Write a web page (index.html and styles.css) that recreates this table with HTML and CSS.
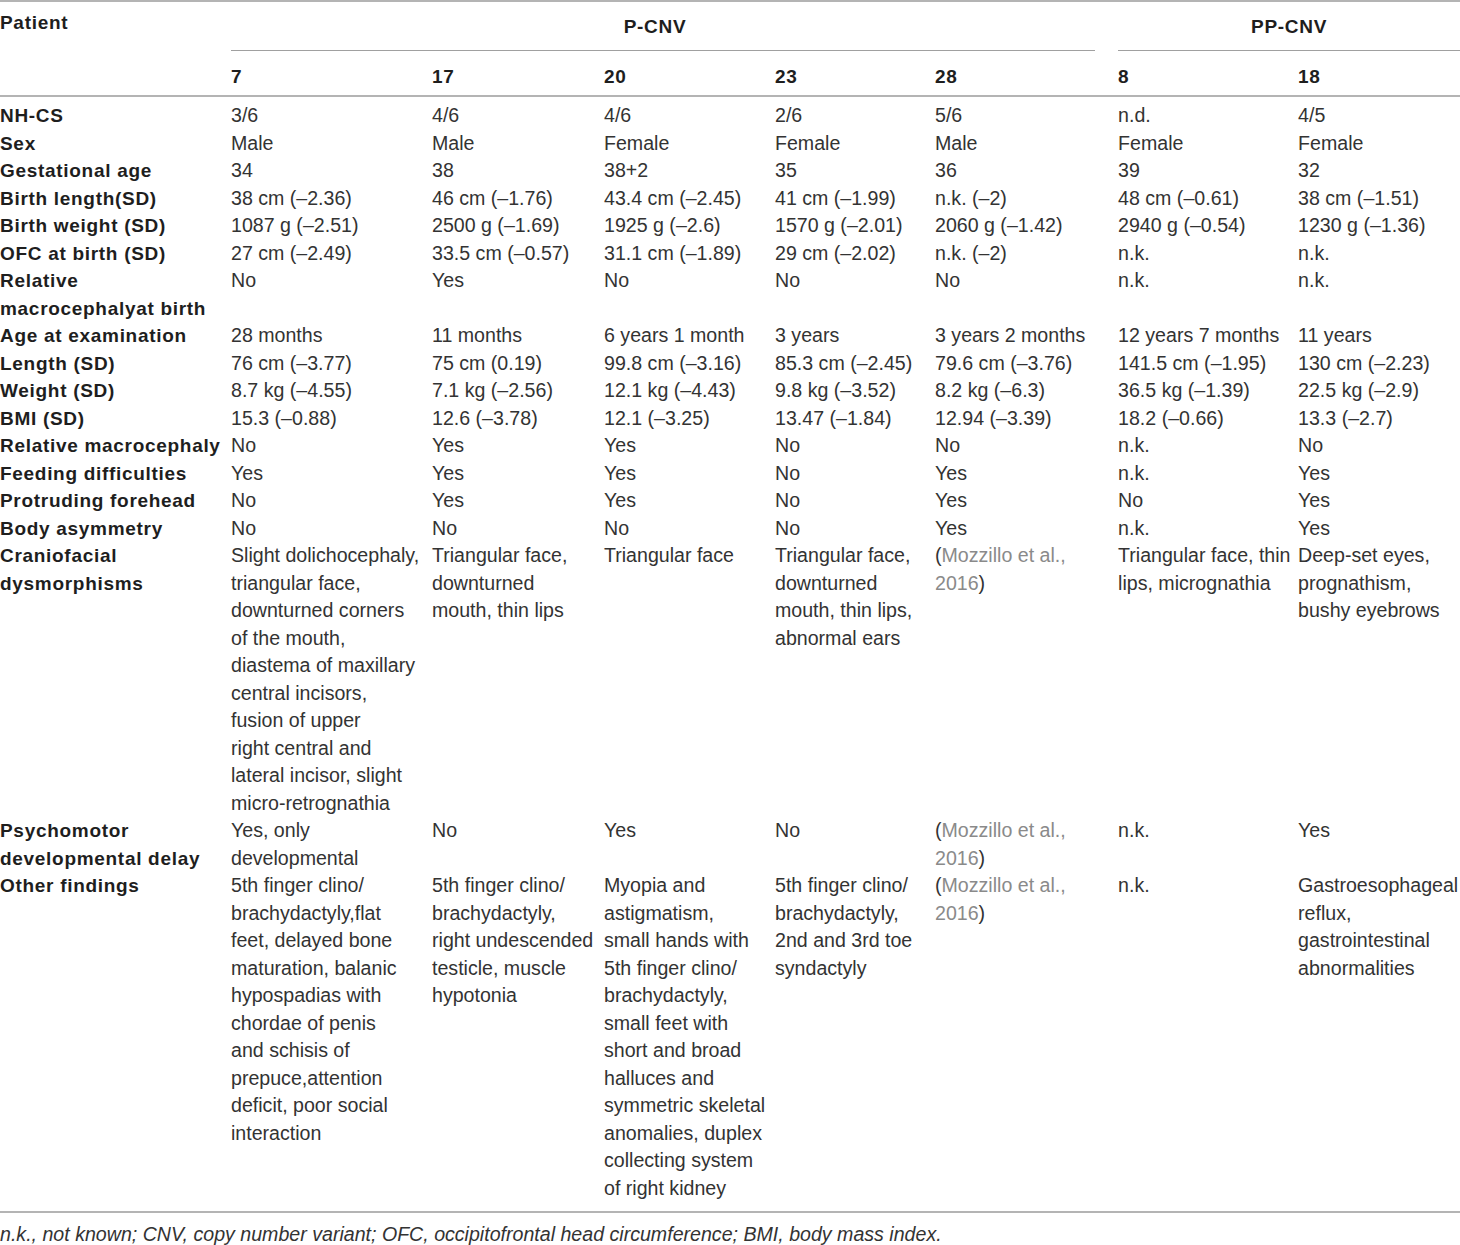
FILE: index.html
```html
<!DOCTYPE html>
<html lang="en">
<head>
<meta charset="UTF-8">
<meta name="viewport" content="width=device-width, initial-scale=1.0">
<title>Patient clinical features</title>
<link rel="stylesheet" href="styles.css">
</head>
<body>
<table class="data-table">
  <colgroup>
    <col class="col-label">
    <col class="col-7">
    <col class="col-17">
    <col class="col-20">
    <col class="col-23">
    <col class="col-28">
    <col class="col-8">
    <col class="col-18">
  </colgroup>
  <thead>
    <tr class="group-row">
      <th class="label">Patient</th>
      <th colspan="5" class="group"><div class="group-title group-p">P-CNV</div></th>
      <th colspan="2" class="group"><div class="group-title">PP-CNV</div></th>
    </tr>
    <tr class="id-row">
      <th></th>
      <th>7</th>
      <th>17</th>
      <th>20</th>
      <th>23</th>
      <th>28</th>
      <th>8</th>
      <th>18</th>
    </tr>
  </thead>
  <tbody>
    <tr class="first-row">
      <th class="label">NH-CS</th>
      <td>3/6</td><td>4/6</td><td>4/6</td><td>2/6</td><td>5/6</td><td>n.d.</td><td>4/5</td>
    </tr>
    <tr>
      <th class="label">Sex</th>
      <td>Male</td><td>Male</td><td>Female</td><td>Female</td><td>Male</td><td>Female</td><td>Female</td>
    </tr>
    <tr>
      <th class="label">Gestational age</th>
      <td>34</td><td>38</td><td>38+2</td><td>35</td><td>36</td><td>39</td><td>32</td>
    </tr>
    <tr>
      <th class="label">Birth length(SD)</th>
      <td>38 cm (–2.36)</td><td>46 cm (–1.76)</td><td>43.4 cm (–2.45)</td><td>41 cm (–1.99)</td><td>n.k. (–2)</td><td>48 cm (–0.61)</td><td>38 cm (–1.51)</td>
    </tr>
    <tr>
      <th class="label">Birth weight (SD)</th>
      <td>1087 g (–2.51)</td><td>2500 g (–1.69)</td><td>1925 g (–2.6)</td><td>1570 g (–2.01)</td><td>2060 g (–1.42)</td><td>2940 g (–0.54)</td><td>1230 g (–1.36)</td>
    </tr>
    <tr>
      <th class="label">OFC at birth (SD)</th>
      <td>27 cm (–2.49)</td><td>33.5 cm (–0.57)</td><td>31.1 cm (–1.89)</td><td>29 cm (–2.02)</td><td>n.k. (–2)</td><td>n.k.</td><td>n.k.</td>
    </tr>
    <tr>
      <th class="label">Relative<br>macrocephalyat birth</th>
      <td>No</td><td>Yes</td><td>No</td><td>No</td><td>No</td><td>n.k.</td><td>n.k.</td>
    </tr>
    <tr>
      <th class="label">Age at examination</th>
      <td>28 months</td><td>11 months</td><td>6 years 1 month</td><td>3 years</td><td>3 years 2 months</td><td>12 years 7 months</td><td>11 years</td>
    </tr>
    <tr>
      <th class="label">Length (SD)</th>
      <td>76 cm (–3.77)</td><td>75 cm (0.19)</td><td>99.8 cm (–3.16)</td><td>85.3 cm (–2.45)</td><td>79.6 cm (–3.76)</td><td>141.5 cm (–1.95)</td><td>130 cm (–2.23)</td>
    </tr>
    <tr>
      <th class="label">Weight (SD)</th>
      <td>8.7 kg (–4.55)</td><td>7.1 kg (–2.56)</td><td>12.1 kg (–4.43)</td><td>9.8 kg (–3.52)</td><td>8.2 kg (–6.3)</td><td>36.5 kg (–1.39)</td><td>22.5 kg (–2.9)</td>
    </tr>
    <tr>
      <th class="label">BMI (SD)</th>
      <td>15.3 (–0.88)</td><td>12.6 (–3.78)</td><td>12.1 (–3.25)</td><td>13.47 (–1.84)</td><td>12.94 (–3.39)</td><td>18.2 (–0.66)</td><td>13.3 (–2.7)</td>
    </tr>
    <tr>
      <th class="label">Relative macrocephaly</th>
      <td>No</td><td>Yes</td><td>Yes</td><td>No</td><td>No</td><td>n.k.</td><td>No</td>
    </tr>
    <tr>
      <th class="label">Feeding difficulties</th>
      <td>Yes</td><td>Yes</td><td>Yes</td><td>No</td><td>Yes</td><td>n.k.</td><td>Yes</td>
    </tr>
    <tr>
      <th class="label">Protruding forehead</th>
      <td>No</td><td>Yes</td><td>Yes</td><td>No</td><td>Yes</td><td>No</td><td>Yes</td>
    </tr>
    <tr>
      <th class="label">Body asymmetry</th>
      <td>No</td><td>No</td><td>No</td><td>No</td><td>Yes</td><td>n.k.</td><td>Yes</td>
    </tr>
    <tr>
      <th class="label">Craniofacial<br>dysmorphisms</th>
      <td>Slight dolichocephaly,<br>triangular face,<br>downturned corners<br>of the mouth,<br>diastema of maxillary<br>central incisors,<br>fusion of upper<br>right central and<br>lateral incisor, slight<br>micro-retrognathia</td>
      <td>Triangular face,<br>downturned<br>mouth, thin lips</td>
      <td>Triangular face</td>
      <td>Triangular face,<br>downturned<br>mouth, thin lips,<br>abnormal ears</td>
      <td>(<a class="cite">Mozzillo et al.,<br>2016</a>)</td>
      <td>Triangular face, thin<br>lips, micrognathia</td>
      <td>Deep-set eyes,<br>prognathism,<br>bushy eyebrows</td>
    </tr>
    <tr>
      <th class="label">Psychomotor<br>developmental delay</th>
      <td>Yes, only<br>developmental</td>
      <td>No</td>
      <td>Yes</td>
      <td>No</td>
      <td>(<a class="cite">Mozzillo et al.,<br>2016</a>)</td>
      <td>n.k.</td>
      <td>Yes</td>
    </tr>
    <tr class="last-row">
      <th class="label">Other findings</th>
      <td>5th finger clino/<br>brachydactyly,flat<br>feet, delayed bone<br>maturation, balanic<br>hypospadias with<br>chordae of penis<br>and schisis of<br>prepuce,attention<br>deficit, poor social<br>interaction</td>
      <td>5th finger clino/<br>brachydactyly,<br>right undescended<br>testicle, muscle<br>hypotonia</td>
      <td>Myopia and<br>astigmatism,<br>small hands with<br>5th finger clino/<br>brachydactyly,<br>small feet with<br>short and broad<br>halluces and<br>symmetric skeletal<br>anomalies, duplex<br>collecting system<br>of right kidney</td>
      <td>5th finger clino/<br>brachydactyly,<br>2nd and 3rd toe<br>syndactyly</td>
      <td>(<a class="cite">Mozzillo et al.,<br>2016</a>)</td>
      <td>n.k.</td>
      <td>Gastroesophageal<br>reflux,<br>gastrointestinal<br>abnormalities</td>
    </tr>
  </tbody>
</table>
<p class="footnote">n.k., not known; CNV, copy number variant; OFC, occipitofrontal head circumference; BMI, body mass index.</p>
</body>
</html>
```

FILE: styles.css
```css
body {
  margin: 0;
  background: #fff;
  color: #333;
  font-family: "Liberation Sans", Arial, sans-serif;
  font-size: 19.6px;
}

.data-table {
  width: 1460px;
  table-layout: fixed;
  border-collapse: collapse;
  border-top: 2px solid #b4b4b4;
  border-bottom: 2px solid #b4b4b4;
}

.col-label { width: 231px; }
.col-7 { width: 201px; }
.col-17 { width: 172px; }
.col-20 { width: 171px; }
.col-23 { width: 160px; }
.col-28 { width: 183px; }
.col-8 { width: 180px; }
.col-18 { width: 162px; }

.data-table th,
.data-table td {
  padding: 0;
  line-height: 27.5px;
  text-align: left;
  vertical-align: top;
  white-space: nowrap;
}

.data-table th {
  color: #1e1e1e;
  font-size: 19px;
  font-weight: bold;
  letter-spacing: 0.7px;
}

.data-table td {
  font-weight: normal;
}

.group-row th {
  padding-top: 7px;
}

.group-title {
  text-align: center;
  padding-top: 4px;
  padding-bottom: 9px;
  border-bottom: 1px solid #a0a0a0;
}

.group-p {
  margin-right: 23px;
  padding-right: 16px;
}

.id-row th {
  padding-top: 12px;
  padding-bottom: 5px;
}

.id-row {
  border-bottom: 2px solid #b4b4b4;
}

.first-row th,
.first-row td {
  padding-top: 5px;
}

.last-row th,
.last-row td {
  padding-bottom: 9px;
}

.cite {
  color: #8a8a8a;
  text-decoration: none;
}

.footnote {
  margin: 8px 0 0;
  font-style: italic;
  line-height: 27px;
  color: #333;
}
```
